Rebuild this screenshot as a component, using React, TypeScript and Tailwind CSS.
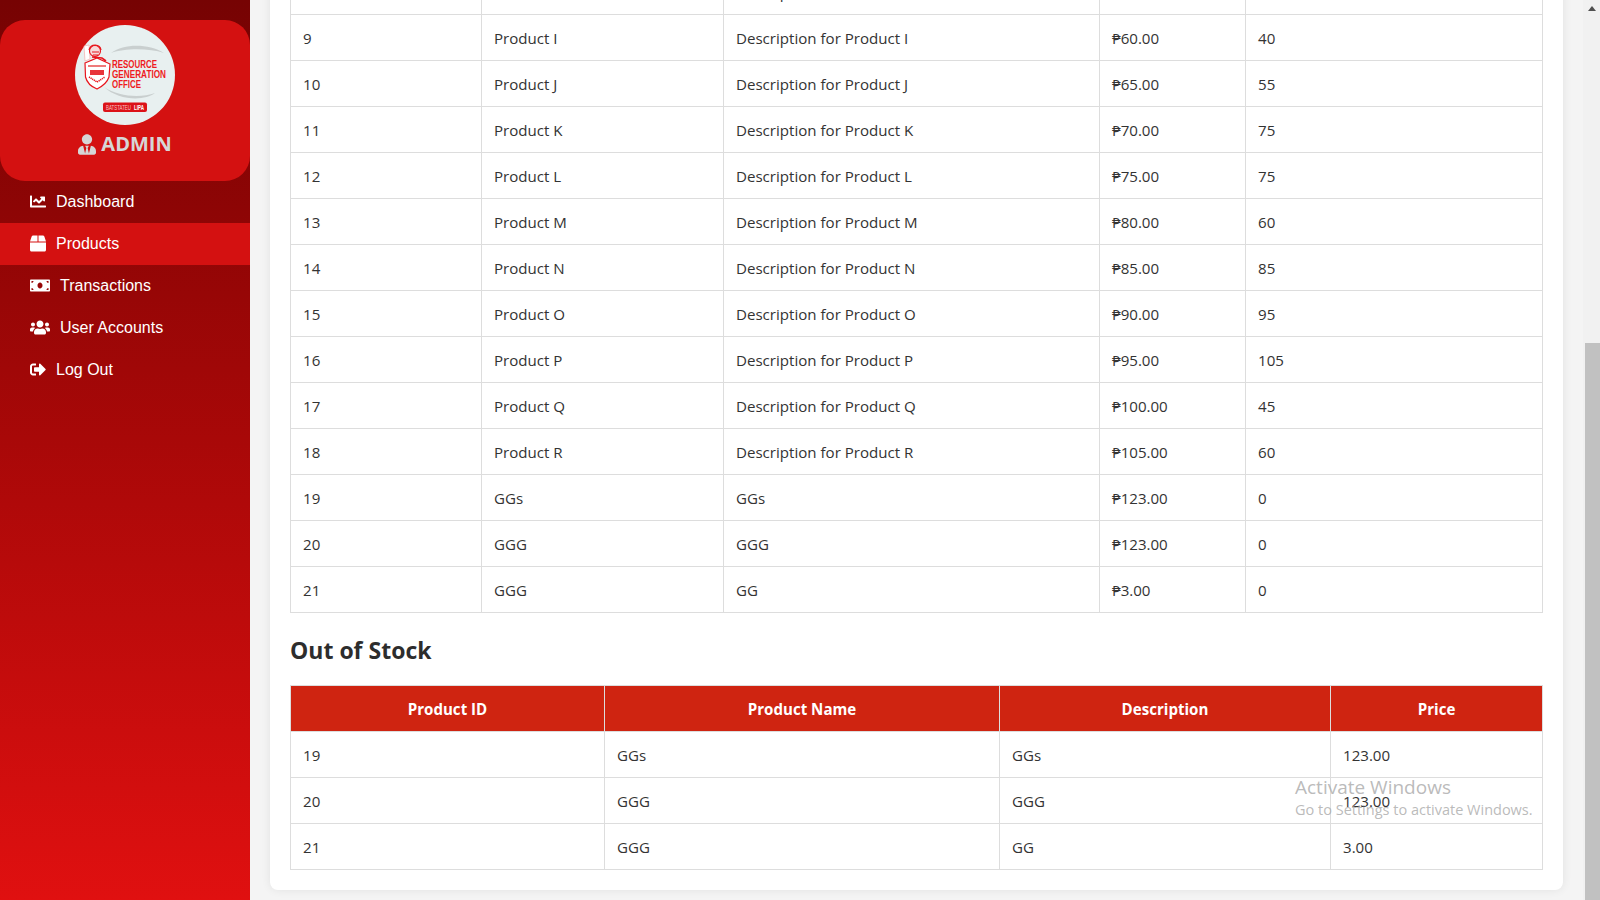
import React from "react";
import { FaChartLine, FaBox, FaMoneyBill, FaUsers, FaSignOutAlt, FaUserTie } from "react-icons/fa";

const names = "IJKLMNOPQR".split("");
const prices = ["60.00","65.00","70.00","75.00","80.00","85.00","90.00","95.00","100.00","105.00"];
const stock = ["40","55","75","75","60","85","95","105","45","60"];
const rows: string[][] = [
  ["8","Product H","Description for Product H","₱55.00","35"],
  ...names.map((n,i)=>[String(i+9),`Product ${n}`,`Description for Product ${n}`,`₱${prices[i]}`,stock[i]]),
  ["19","GGs","GGs","₱123.00","0"],
  ["20","GGG","GGG","₱123.00","0"],
  ["21","GGG","GG","₱3.00","0"],
];
const out = [["19","GGs","GGs","123.00"],["20","GGG","GGG","123.00"],["21","GGG","GG","3.00"]];

const nav = [
  { label:"Dashboard", Icon:FaChartLine, w:"w-[16px]", gap:"mr-2.5" },
  { label:"Products", Icon:FaBox, w:"w-[16px]", gap:"mr-2.5", active:true },
  { label:"Transactions", Icon:FaMoneyBill, w:"w-[20px]", gap:"mr-2.5" },
  { label:"User Accounts", Icon:FaUsers, w:"w-[20px]", gap:"mr-2.5" },
  { label:"Log Out", Icon:FaSignOutAlt, w:"w-[16px]", gap:"mr-2.5" },
];

function Logo(){
  return (
    <svg viewBox="0 0 100 100" className="w-[100px] h-[100px] block" role="img" aria-label="Resource Generation Office">
      <circle cx="50" cy="50" r="50" fill="#e8f0f0"/>
      <path d="M36 28 C50 18 74 19 89 28 C74 23 50 23 36 28Z" fill="#c9cfcf"/>
      <path d="M29 62 C44 76 70 76 80 68 C66 73 44 72 29 62Z" fill="#c9cfcf"/>
      <path d="M9 21 L14 20 L15 34 L10 36Z" fill="#fff" stroke="#f3a0a0" strokeWidth="0.6"/>
      <circle cx="20" cy="26" r="5.5" fill="#f6dada" stroke="#e8141c" strokeWidth="1.1"/>
      <path d="M14 25 C16 18 25 19 26 25 M17 27 L24 27 M18 30 L23 30" fill="none" stroke="#e8141c" strokeWidth="1.2"/>
      <path d="M17 32 L27 33 L31 36" fill="none" stroke="#e8141c" strokeWidth="1.6"/>
      <path d="M10 38 L22 33 L35 39 L34 52 C32 58 26 62 22 64 C17 62 12 58 10.5 52Z" fill="#fff" stroke="#e8141c" strokeWidth="1.2"/>
      <rect x="13" y="40" width="18" height="2" fill="#ee7a7a"/>
      <rect x="15" y="45" width="14" height="5" fill="#e8343a"/>
      <path d="M14 52 L22 57 L30 52" fill="none" stroke="#e8141c" strokeWidth="1.6" strokeDasharray="1.2 .7"/>
      <g fontFamily="'Liberation Sans',sans-serif" fontWeight="700" fill="#ef1b22" fontSize="11.5">
        <text x="37" y="42.5" textLength="45" lengthAdjust="spacingAndGlyphs">RESOURCE</text>
        <text x="37" y="53" textLength="54" lengthAdjust="spacingAndGlyphs">GENERATION</text>
        <text x="37" y="63" textLength="29" lengthAdjust="spacingAndGlyphs">OFFICE</text>
      </g>
      <rect x="28" y="77.5" width="44" height="9.5" rx="2" fill="#dc1218"/>
      <text x="31" y="85" fontSize="7" textLength="25" lengthAdjust="spacingAndGlyphs" fontFamily="'Liberation Sans',sans-serif" fill="#f8c5c5">BATSTATEU</text>
      <text x="59" y="85" fontSize="7" fontWeight="700" textLength="10" lengthAdjust="spacingAndGlyphs" fontFamily="'Liberation Sans',sans-serif" fill="#fff">LIPA</text>
    </svg>
  );
}

function Sidebar(){
  return (
    <aside className="w-[250px] h-screen shrink-0 pt-5 bg-gradient-to-b from-[#760303] to-[#e01010]">
      <div className="h-[161px] bg-[#d41111] rounded-[25px] flex flex-col items-center pt-[5px]">
        <Logo/>
        <div className="flex items-center mt-1 text-[#d6d6d6] font-bold text-[20px] leading-[30px] font-['Open_Sans',sans-serif]">
          <FaUserTie className="w-[18px] h-[21px] mr-[5px]"/>
          <span>ADMIN</span>
        </div>
      </div>
      <nav className="font-['Liberation_Sans',Arial,sans-serif] text-base text-white">
        {nav.map(({label,Icon,w,gap,active})=>(
          <div key={label} className={`h-[42px] flex items-center pl-[30px] ${active?"bg-[#d41111]":""}`}>
            <Icon className={`${w} h-[17px] -mt-0.5 ${gap}`}/>
            <span>{label}</span>
          </div>
        ))}
      </nav>
    </aside>
  );
}

const td = "border border-[#dddddd] px-3 pt-0.5 align-middle font-normal";

function Card(){
  return (
    <section className="w-[1293px] bg-white rounded-lg shadow-[0_0_10px_rgba(0,0,0,0.08)] pl-5 pr-[21px] pb-5 ml-5 shrink-0 text-[#333333] text-[15.1px] font-['Open_Sans','Noto_Sans',sans-serif]">
      <table className="w-[1252px] table-fixed border-collapse">
        <colgroup>
          <col className="w-[191px]"/><col className="w-[242px]"/><col className="w-[376px]"/><col className="w-[146px]"/><col className="w-[297px]"/>
        </colgroup>
        <tbody>
          {rows.map(r=>(
            <tr key={r[0]} className="h-[46px]">
              {r.map((c,i)=><td key={i} className={td}>{c}</td>)}
            </tr>
          ))}
        </tbody>
      </table>
      <h2 className="text-[23px] leading-[32px] font-bold text-[#2d2d2d] mt-[21px] mb-[19px]">Out of Stock</h2>
      <table className="w-[1252px] table-fixed border-collapse">
        <colgroup>
          <col className="w-[314px]"/><col className="w-[395px]"/><col className="w-[331px]"/><col className="w-[212px]"/>
        </colgroup>
        <thead>
          <tr className="h-[46px] bg-[#cf2411] text-white">
            {["Product ID","Product Name","Description","Price"].map(h=><th key={h} className="border border-[#dddddd] px-3 pt-0.5 font-bold text-center">{h}</th>)}
          </tr>
        </thead>
        <tbody>
          {out.map(r=>(
            <tr key={r[0]} className="h-[46px]">
              {r.map((c,i)=><td key={i} className={td}>{c}</td>)}
            </tr>
          ))}
        </tbody>
      </table>
    </section>
  );
}

function Scrollbar(){
  return (
    <div className="w-[17px] h-screen shrink-0 bg-[#f1f1f1] flex flex-col">
      <div className="h-[17px] flex items-center justify-center">
        <svg viewBox="0 0 8 5" className="w-2 h-[5px]"><path d="M4 0 L8 5 L0 5Z" fill="#505050"/></svg>
      </div>
      <div className="flex-1"/>
      <div className="h-[557px] ml-0.5 bg-[#c1c1c1]"/>
    </div>
  );
}

export default function App(){
  return (
    <div className="h-screen w-full flex overflow-hidden bg-[#f4f4f4] relative">
      <Sidebar/>
      <main className="flex-1 h-screen overflow-hidden flex flex-col justify-end pb-2.5">
        <Card/>
      </main>
      <Scrollbar/>
      <div className="absolute left-[1295px] top-[774px] text-[#a9a9a9]/80 font-['Open_Sans',sans-serif] pointer-events-none">
        <div className="text-[19px] leading-[26px]">Activate Windows</div>
        <div className="text-[14.5px] leading-[20px]">Go to Settings to activate Windows.</div>
      </div>
    </div>
  );
}
